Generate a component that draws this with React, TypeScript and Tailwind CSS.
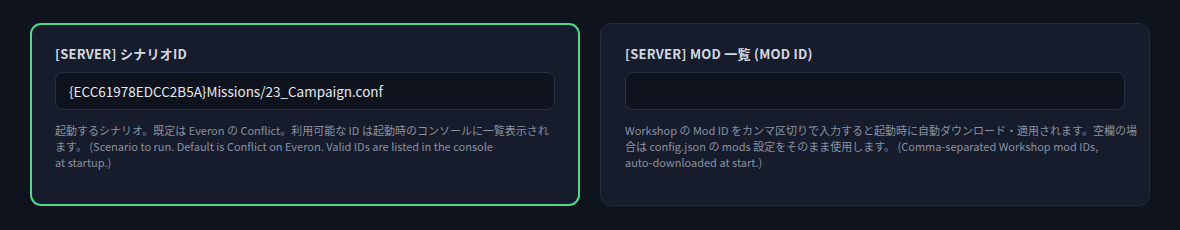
import React from "react";

const font = { fontFamily: '"Noto Sans CJK JP", "Noto Sans", sans-serif' };

function Field({
  label,
  value,
  lines,
  active,
}: {
  label: string;
  value: string;
  lines: string[];
  active?: boolean;
}) {
  return (
    <div
      className={
        active
          ? "rounded-[11px] border-2 border-[#4fd98a] bg-[#161c2b] px-[23px] pt-[19px] pb-[34px]"
          : "rounded-[11px] border border-[#242b3c] bg-[#161c2b] px-6 pt-5 pb-[35px]"
      }
    >
      <div className="text-[13px] font-bold leading-5 tracking-[0.02em] text-[#d3d8e0]">{label}</div>
      <div className="mt-2 flex h-[38px] items-center rounded-lg border border-[#283045] bg-[#0f131e] px-[13px] text-[13.5px] text-[#e6e9ef]">
        {value}
      </div>
      <p className="mt-3 text-[11px] leading-4 text-[#8a91a1]">
        {lines.map((l, i) => (
          <span key={i} className="block whitespace-nowrap">
            {l}
          </span>
        ))}
      </p>
    </div>
  );
}

export default function App() {
  return (
    <div className="min-h-[230px] bg-[#0f131e] px-[30px] pt-[23px]" style={font}>
      <div className="grid grid-cols-2 gap-5">
        <Field
          active
          label="[SERVER] シナリオID"
          value="{ECC61978EDCC2B5A}Missions/23_Campaign.conf"
          lines={[
            "起動するシナリオ。既定は Everon の Conflict。利用可能な ID は起動時のコンソールに一覧表示され",
            "ます。 (Scenario to run. Default is Conflict on Everon. Valid IDs are listed in the console",
            "at startup.)",
          ]}
        />
        <Field
          label="[SERVER] MOD 一覧 (MOD ID)"
          value=""
          lines={[
            "Workshop の Mod ID をカンマ区切りで入力すると起動時に自動ダウンロード・適用されます。空欄の場",
            "合は config.json の mods 設定をそのまま使用します。 (Comma-separated Workshop mod IDs,",
            "auto-downloaded at start.)",
          ]}
        />
      </div>
    </div>
  );
}
